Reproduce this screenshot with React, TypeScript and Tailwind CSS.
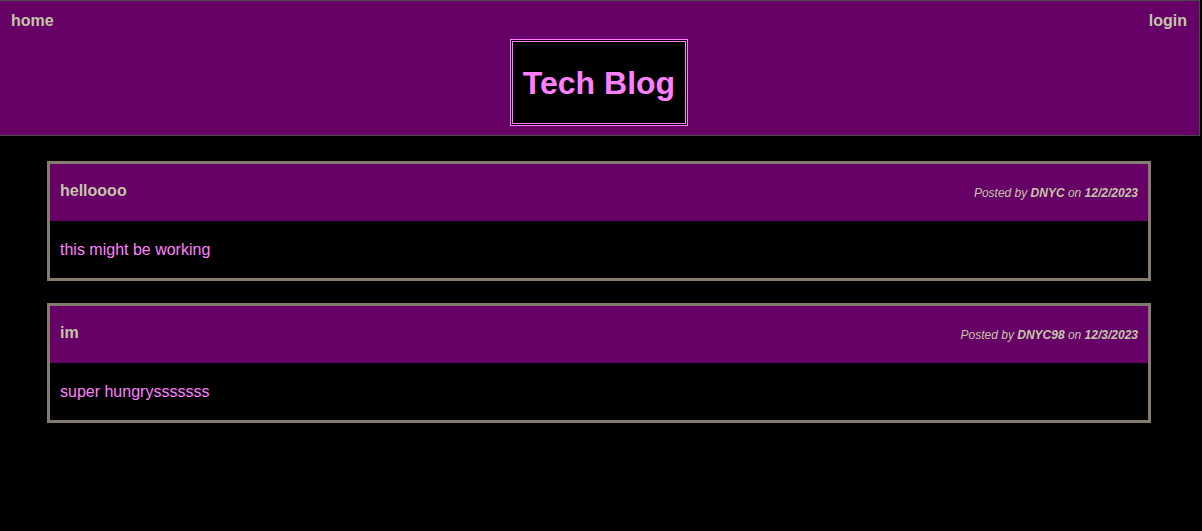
import React from "react";

const posts = [
  { title: "helloooo", user: "DNYC", date: "12/2/2023", body: "this might be working" },
  { title: "im", user: "DNYC98", date: "12/3/2023", body: "super hungrysssssss" },
];

export default function App() {
  return (
    <div className="min-h-[531px] w-[1202px] bg-black font-['Liberation_Sans',Arial,sans-serif]">
      <header className="w-[1200px] h-[136px] border-t border-r border-b border-[#4a4a4a] bg-[#660066]">
        <nav className="flex justify-between items-start h-[38px] pt-[11px] pl-[11px] pr-[12px]">
          <a className="text-[16px] leading-[18px] font-bold text-[#c3c7a6]">home</a>
          <a className="text-[16px] leading-[18px] font-bold text-[#c3c7a6]">login</a>
        </nav>
        <div className="flex justify-center">
          <div className="-ml-[1px] w-[178px] h-[87px] border-[3px] border-double border-[#ff80ff] bg-black flex items-center justify-center">
            <h1 className="text-[32px] font-bold text-[#ff80ff] leading-none">Tech Blog</h1>
          </div>
        </div>
      </header>
      <main className="flex flex-col gap-[22px] pt-[25px] pl-[47px]">
        {posts.map((p) => (
          <div key={p.title} className="w-[1104px] border-[3px] border-[#857c6e]">
            <div className="h-[57px] bg-[#660066] flex justify-between items-center px-[10px]">
              <h2 className="text-[16px] font-bold text-[#c3c7a6] mb-[4px]">{p.title}</h2>
              <p className="text-[12px] italic text-[#c3c7a6]">
                Posted by <b>{p.user}</b> on <b>{p.date}</b>
              </p>
            </div>
            <div className="h-[57px] flex items-center px-[10px] text-[16px] text-[#ff80ff]">
              {p.body}
            </div>
          </div>
        ))}
      </main>
    </div>
  );
}
